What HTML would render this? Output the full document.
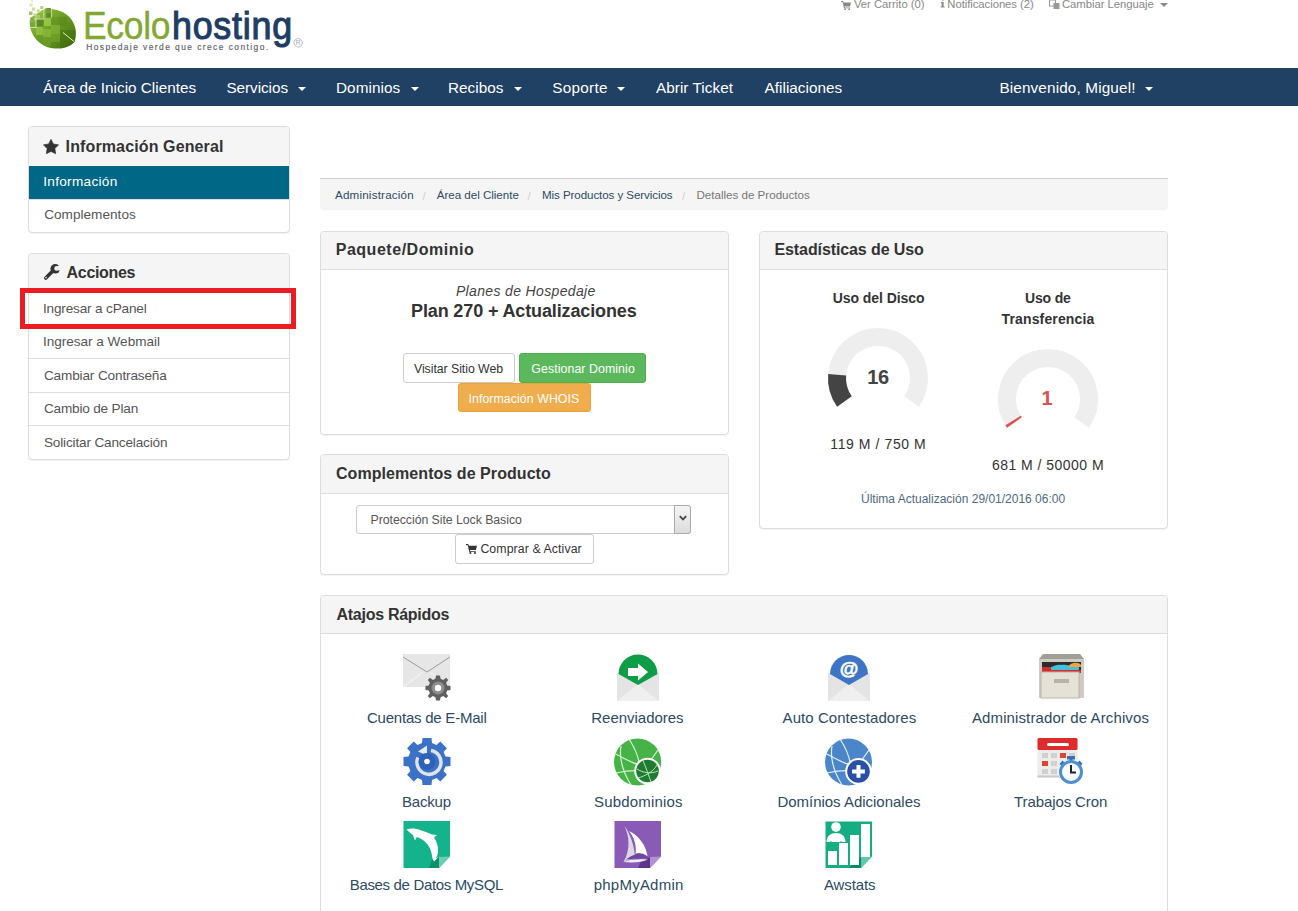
<!DOCTYPE html>
<html><head><meta charset="utf-8">
<style>
*{box-sizing:border-box;margin:0;padding:0}
html,body{width:1298px;height:911px;overflow:hidden;background:#fff;font-family:"Liberation Sans",sans-serif;color:#333}
.t{position:absolute;white-space:nowrap;line-height:1}
.b{position:absolute}
.panel{position:absolute;border:1px solid #ddd;border-radius:4px;background:#fff;box-shadow:0 1px 1px rgba(0,0,0,.05);overflow:hidden}
.ph{position:absolute;left:0;top:0;right:0;background:#f5f5f5;border-bottom:1px solid #ddd}
.li{position:absolute;left:0;right:0;height:1px;background:#ddd}
.caret{position:absolute;width:0;height:0;border-left:4px solid transparent;border-right:4px solid transparent;border-top:4px solid #fff}
svg{position:absolute;overflow:visible}
</style></head><body>
<!-- ===== LOGO ===== -->
<svg style="left:0;top:0" width="1" height="1">
  <defs>
    <linearGradient id="lg1" x1="0" y1="0" x2="1" y2="1">
      <stop offset="0" stop-color="#a2cf4a"/><stop offset=".45" stop-color="#6f9f26"/><stop offset="1" stop-color="#3d6a0c"/>
    </linearGradient>
    <clipPath id="leafc"><path d="M47 9 C60 8.5 73 15 75.5 29 C76.3 34 75.5 39 74.5 42 C70 47 62 49 55 48.5 C44 48 34 41 30.5 29 C29.5 25 29.5 21 30 18 L46 8Z"/></clipPath>
  </defs>
  <g clip-path="url(#leafc)">
    <rect x="28" y="6" width="50" height="44" fill="url(#lg1)"/>
    <rect x="51" y="17" width="8" height="8" fill="#5f8f1f" opacity=".45"/>
    <rect x="59" y="17" width="8" height="9" fill="#4f7f15" opacity=".4"/>
    <rect x="51" y="25" width="9" height="9" fill="#8dbb3c" opacity=".55"/>
    <rect x="43" y="29" width="8" height="8" fill="#93c445" opacity=".6"/>
    <rect x="43" y="37" width="8" height="9" fill="#76a82c" opacity=".45"/>
    <rect x="51" y="34" width="9" height="8" fill="#7fae33" opacity=".45"/>
    <rect x="36" y="27" width="7" height="8" fill="#9fcf4f" opacity=".6"/>
    <rect x="60" y="30" width="16" height="20" fill="#3a650a" opacity=".35"/>
    <rect x="30" y="22" width="5.5" height="6" fill="#7aa83a"/>
    <rect x="36.5" y="19.5" width="7" height="7" fill="#5a8a20"/>
    <rect x="44" y="18" width="7" height="8" fill="#a9d552" opacity=".6"/>
  </g>
  <g stroke="#fff" stroke-width=".9" opacity=".7">
    <path d="M28 19 H44 M28 27.5 H36.5 M36 0 V27.5 M43.8 0 V19 M51.3 0 V17.8"/>
  </g>
  <path d="M63 32.5 L74 41.5" stroke="#e4f2c2" stroke-width="1"/>
  <g>
    <rect x="46.3" y="8" width="4.5" height="4.5" fill="#6f9934"/>
    <rect x="46.3" y="13" width="4.5" height="4.5" fill="#5e8a2a"/>
    <rect x="40.5" y="15.5" width="3" height="3" fill="#8fb54a"/>
    <rect x="40.3" y="6" width="3" height="3" fill="#b8d27a"/>
    <rect x="36.8" y="9.5" width="3" height="3" fill="#c5dc8e"/>
    <rect x="37" y="15" width="3" height="3" fill="#a9c766"/>
    <rect x="32" y="7.5" width="3" height="3" fill="#c7dd92"/>
    <rect x="29" y="11.5" width="3.5" height="3.5" fill="#a8bf7a"/>
    <rect x="33.5" y="13.5" width="2.5" height="2.5" fill="#bed58a"/>
    <rect x="29.5" y="3.5" width="3" height="3" fill="#d8e8b0"/>
    <rect x="31" y="0" width="2" height="2" fill="#e4efc8"/>
    <rect x="30.5" y="17.5" width="3.5" height="3.5" fill="#8aaa5a"/>
    <rect x="41" y="10.5" width="2.5" height="2.5" fill="#9cbf5a"/>
  </g>
</svg>
<div class="t" style="left:83px;top:7.3px;font-size:38px;line-height:1;color:#83a732;transform:scaleX(.933);transform-origin:0 0;letter-spacing:-.3px;-webkit-text-stroke:.4px #83a732">Ecolo</div>
<div class="t" style="left:172px;top:7.3px;font-size:38px;line-height:1;color:#1f3d63;transform:scaleX(.943);transform-origin:0 0;letter-spacing:.8px;-webkit-text-stroke:1.1px #1f3d63">hosting</div>
<svg style="left:293px;top:38px" width="11" height="11" viewBox="0 0 11 11"><circle cx="5.2" cy="4.8" r="4.2" fill="none" stroke="#a8a8b0" stroke-width=".8"/><text x="5.2" y="7.2" text-anchor="middle" font-family="Liberation Sans" font-size="6.5" fill="#a8a8b0">R</text></svg>

<!-- ===== TOP LINKS ICONS ===== -->
<svg style="left:841px;top:0.5" width="10" height="9" viewBox="0 0 10 9">
  <path d="M0 0 H2 L2.6 1.5 H10 L9 5.5 H3.5 L3.8 6.5 H9 V7.2 H3 L1.6 1 H0Z" fill="#888"/>
  <circle cx="4" cy="8.2" r=".9" fill="#888"/><circle cx="8.2" cy="8.2" r=".9" fill="#888"/>
</svg>
<svg style="left:939.5px;top:-1.5px" width="5" height="9" viewBox="0 0 5 9">
  <circle cx="2.7" cy="0.6" r="1.1" fill="#888"/><path d="M1 3 H3.6 V7.5 H4.6 V8.6 H0.6 V7.5 H1.6 V4.1 H1Z" fill="#888"/>
</svg>
<svg style="left:1049px;top:0" width="11" height="9" viewBox="0 0 11 9">
  <rect x="0.5" y="0" width="6" height="6" fill="none" stroke="#999" stroke-width="1"/>
  <rect x="4.5" y="3" width="6" height="6" fill="#999"/>
</svg>
<div class="caret" style="left:1160px;top:3px;border-top-color:#888;border-left-width:4px;border-right-width:4px"></div>

<!-- ===== NAV ===== -->
<div class="b" style="left:0;top:68px;width:1298px;height:38px;background:#204064"></div>
<div class="caret" style="left:298px;top:87px"></div>
<div class="caret" style="left:411px;top:87px"></div>
<div class="caret" style="left:514px;top:87px"></div>
<div class="caret" style="left:617px;top:87px"></div>
<div class="caret" style="left:1145px;top:87px"></div>

<!-- ===== SIDEBAR 1 ===== -->
<div class="panel" style="left:28px;top:126px;width:262px;height:107px">
  <div class="ph" style="height:40px;border-bottom:0"></div>
  <div class="b" style="left:0;top:39px;width:262px;height:33px;background:#006787"></div>
  <div class="li" style="top:72px"></div>
</div>
<svg style="left:43.2px;top:138.5px" width="16" height="15" viewBox="0 0 16 15">
  <path d="M8.00 0.30 L10.41 4.98 L15.61 5.83 L11.90 9.57 L12.70 14.77 L8.00 12.40 L3.30 14.77 L4.10 9.57 L0.39 5.83 L5.59 4.98Z" fill="#333" stroke="#333" stroke-width=".6" stroke-linejoin="round"/>
</svg>

<!-- ===== SIDEBAR 2 ===== -->
<div class="panel" style="left:28px;top:253px;width:262px;height:207px">
  <div class="ph" style="height:38px"></div>
  <div class="li" style="top:71px"></div>
  <div class="li" style="top:104px"></div>
  <div class="li" style="top:138px"></div>
  <div class="li" style="top:171px"></div>
</div>
<svg style="left:0;top:0" width="1" height="1">
  <path d="M45.8 278 L52.5 271.3" stroke="#333" stroke-width="3.6" stroke-linecap="round"/>
  <circle cx="55.2" cy="268.8" r="4.8" fill="#333"/>
  <circle cx="56.6" cy="268.4" r="2.3" fill="#f5f5f5"/>
  <path d="M57 266.6 L61 264.5 L61.5 270.5 L57.5 270.2Z" fill="#f5f5f5"/>
  <circle cx="46" cy="277.6" r=".8" fill="#f5f5f5"/>
</svg>
<div class="b" style="left:20px;top:288px;width:276px;height:41px;border:5px solid #ec1c24"></div>

<!-- ===== BREADCRUMB ===== -->
<div class="b" style="left:320px;top:178px;width:848px;height:32px;background:#f5f5f5;border-top:1px solid #cfcfcf;border-radius:0 0 4px 4px"></div>

<!-- ===== PAQUETE ===== -->
<div class="panel" style="left:320px;top:231px;width:409px;height:204px">
  <div class="ph" style="height:38px"></div>
</div>
<div class="b" style="left:403px;top:353px;width:112px;height:30px;background:#fff;border:1px solid #ccc;border-radius:3px"></div>
<div class="b" style="left:519px;top:353px;width:127px;height:30px;background:#5cb85c;border:1px solid #4cae4c;border-radius:3px"></div>
<div class="b" style="left:458px;top:383px;width:133px;height:29px;background:#f0ad4e;border:1px solid #eea236;border-radius:3px"></div>

<!-- ===== STATS ===== -->
<div class="panel" style="left:759px;top:231px;width:409px;height:298px">
  <div class="ph" style="height:38px"></div>
</div>
<svg style="left:0;top:0" width="1" height="1">
  <!-- gauge 1: center 878,378 r=41 sw=18 ; from -125deg to +125deg -->
  <path d="M844.42 401.52 A41 41 0 1 1 911.58 401.52" fill="none" stroke="#eeeeee" stroke-width="18"/>
  <path d="M844.42 401.52 A41 41 0 0 1 837.14 374.66" fill="none" stroke="#444" stroke-width="18"/>
  <!-- gauge 2: center 1048,399 r=41 -->
  <path d="M1014.42 422.52 A41 41 0 1 1 1081.58 422.52" fill="none" stroke="#eeeeee" stroke-width="18"/>
  <path d="M1014.42 422.52 A41 41 0 0 1 1013.08 420.48" fill="none" stroke="#d9534f" stroke-width="18"/>
</svg>

<!-- ===== COMPLEMENTOS ===== -->
<div class="panel" style="left:320px;top:454px;width:409px;height:121px">
  <div class="ph" style="height:39px"></div>
</div>
<div class="b" style="left:356px;top:505px;width:335px;height:29px;background:#fff;border:1px solid #ccc;border-radius:3px"></div>
<div class="b" style="left:674px;top:505px;width:17px;height:29px;background:linear-gradient(#f4f4f4,#dcdcdc);border:1px solid #aaa;border-radius:0 3px 3px 0"></div>
<svg style="left:679px;top:515px" width="8" height="7" viewBox="0 0 8 7">
  <path d="M.8 1.2 L4 4.4 L7.2 1.2" fill="none" stroke="#444" stroke-width="1.8"/>
</svg>
<div class="b" style="left:455px;top:534px;width:139px;height:30px;background:#fff;border:1px solid #ccc;border-radius:3px"></div>
<svg style="left:466px;top:544px" width="11" height="10" viewBox="0 0 10 9">
  <path d="M0 0 H2 L2.6 1.5 H10 L9 5.5 H3.5 L3.8 6.5 H9 V7.2 H3 L1.6 1 H0Z" fill="#333"/>
  <circle cx="4" cy="8.2" r=".9" fill="#333"/><circle cx="8.2" cy="8.2" r=".9" fill="#333"/>
</svg>

<!-- ===== ATAJOS ===== -->
<div class="panel" style="left:320px;top:595px;width:848px;height:340px">
  <div class="ph" style="height:38px"></div>
</div>
<!-- email accounts -->
<svg style="left:403px;top:654px" width="48" height="48" viewBox="0 0 48 48">
  <rect x="0" y="0" width="47" height="33" fill="#e6e6e6"/>
  <path d="M0 33 L20 18 M47 33 L27 18" stroke="#f2f2f2" stroke-width="1.2"/>
  <path d="M0 3 L24 18 L47 3" fill="none" stroke="#9a9a9a" stroke-width="1"/>
  <g transform="translate(35 34)">
    <path d="M-2 -12.5 H2 L2.6 -9.2 L5.2 -8.1 L8.1 -10.2 L10.2 -8.1 L8.1 -5.2 L9.2 -2.6 L12.5 -2 V2 L9.2 2.6 L8.1 5.2 L10.2 8.1 L8.1 10.2 L5.2 8.1 L2.6 9.2 L2 12.5 H-2 L-2.6 9.2 L-5.2 8.1 L-8.1 10.2 L-10.2 8.1 L-8.1 5.2 L-9.2 2.6 L-12.5 2 V-2 L-9.2 -2.6 L-8.1 -5.2 L-10.2 -8.1 L-8.1 -10.2 L-5.2 -8.1 L-2.6 -9.2Z" fill="#5f5f5f"/>
    <circle r="6.5" fill="#8e8e8e"/><circle r="3.2" fill="#fff"/>
  </g>
</svg>
<!-- forwarders -->
<svg style="left:617px;top:654px" width="48" height="48" viewBox="0 0 48 48">
  <rect x="0" y="19" width="42" height="28" fill="#e4e4e4"/>
  <path d="M0 47 L21 30 L42 47Z" fill="#efefef"/>
  <path d="M1.5 20 A19.5 19.5 0 0 1 40.5 20 L21 31 Z" fill="#0e9c47"/>
  <path d="M11 14 H21 V9.5 L31 18 L21 26.5 V22 H11Z" fill="#fff"/>
</svg>
<!-- auto responders -->
<svg style="left:828px;top:654px" width="48" height="48" viewBox="0 0 48 48">
  <rect x="0" y="19" width="42" height="28" fill="#e4e4e4"/>
  <path d="M0 47 L21 30 L42 47Z" fill="#efefef"/>
  <path d="M2 20 A19 19 0 0 1 40 20 L21 31 Z" fill="#3d74c3"/>
  <text x="21" y="21" text-anchor="middle" font-family="Liberation Sans" font-weight="bold" font-size="19" fill="#fff" stroke="#fff" stroke-width=".6">@</text>
</svg>
<!-- file manager -->
<svg style="left:1039px;top:654px" width="48" height="48" viewBox="0 0 48 48">
  <path d="M4 0 H41 L45 5 H0Z" fill="#a29d96"/>
  <rect x="0" y="5" width="45" height="39" fill="#cfcbc2"/>
  <rect x="3" y="8" width="39" height="11" fill="#2b2b2b"/>
  <path d="M3 13 H12 L13 19 H3Z" fill="#d62a2a"/>
  <path d="M12 13 C16 12 18 10 22 11 C26 10 30 12 40 12 V16 H12Z" fill="#46bfd8"/>
  <path d="M30 12 C32 8 40 8 42 11 V13 H30Z" fill="#f3a33b"/>
  <rect x="12" y="16" width="30" height="3" fill="#d62a2a"/>
  <rect x="2" y="18" width="38" height="26" fill="#e5e1d6" stroke="#b9b4aa" stroke-width="1"/>
  <rect x="15" y="25" width="15" height="4" fill="#b8b2a6"/>
</svg>
<!-- backup -->
<svg style="left:403px;top:738px" width="48" height="48" viewBox="0 0 48 48">
  <g transform="translate(24 23.5)">
    <path d="M-4.5 -23.5 H4.5 L5 -18.5 L9.5 -16.6 L13.3 -19.9 L19.9 -13.3 L16.6 -9.5 L18.5 -5 L23.5 -4.5 V4.5 L18.5 5 L16.6 9.5 L19.9 13.3 L13.3 19.9 L9.5 16.6 L5 18.5 L4.5 23.5 H-4.5 L-5 18.5 L-9.5 16.6 L-13.3 19.9 L-19.9 13.3 L-16.6 9.5 L-18.5 5 L-23.5 4.5 V-4.5 L-18.5 -5 L-16.6 -9.5 L-19.9 -13.3 L-13.3 -19.9 L-9.5 -16.6 L-5 -18.5Z" fill="#3b71c6"/>
    <path d="M-9 -4 A12 12 0 1 0 4 -11" fill="none" stroke="#dfe3ea" stroke-width="3.5"/>
    <path d="M0 -16 L-9 -10 L0 -6Z" fill="#e8ecf2"/>
    <circle r="8.5" fill="#2e62b8"/>
    <circle r="2.8" fill="#fff"/>
  </g>
</svg>
<!-- subdomains -->
<svg style="left:613px;top:738px" width="50" height="50" viewBox="0 0 50 50">
  <circle cx="24.6" cy="24" r="23.6" fill="#45b348"/>
  <g fill="none" stroke="#d8f5cf" stroke-width="1.2">
    <path d="M16 1 C22 10 26 20 27 30"/>
    <path d="M1 15 C10 20 20 26 28 27"/>
    <path d="M3 35 C12 33 22 32 30 33"/>
    <path d="M8 8 C6 20 10 34 18 47"/>
    <path d="M45 12 C40 20 34 26 30 29"/>
  </g>
  <circle cx="34.5" cy="33" r="13.3" fill="#fff"/>
  <circle cx="34.5" cy="33" r="11.3" fill="#1f7a32"/>
  <g fill="none" stroke="#b5e8b0" stroke-width="1">
    <path d="M24 31 C30 35 38 36 45 33"/>
    <path d="M30 22.5 C33 30 36 38 38 44"/>
    <path d="M25 40 C32 38 40 34 44 27"/>
  </g>
</svg>
<!-- addon domains -->
<svg style="left:824px;top:738px" width="50" height="50" viewBox="0 0 50 50">
  <circle cx="24.5" cy="24" r="23.5" fill="#4a86c9"/>
  <g fill="none" stroke="#e3efff" stroke-width="1.2">
    <path d="M16 1 C22 10 26 20 27 30"/>
    <path d="M1 15 C10 20 20 26 28 27"/>
    <path d="M3 35 C12 33 22 32 30 33"/>
    <path d="M8 8 C6 20 10 34 18 47"/>
    <path d="M45 12 C40 20 34 26 30 29"/>
  </g>
  <circle cx="34.5" cy="33.4" r="13.3" fill="#fff"/>
  <circle cx="34.5" cy="33.4" r="11.3" fill="#2a4fa6"/>
  <path d="M32.5 27 H36.5 V31.4 H40.9 V35.4 H36.5 V39.8 H32.5 V35.4 H28.1 V31.4 H32.5Z" fill="#fff"/>
</svg>
<!-- cron -->
<svg style="left:1037px;top:738px" width="50" height="50" viewBox="0 0 50 50">
  <rect x="0.5" y="0" width="40" height="39.5" rx="1.5" fill="#ececec"/>
  <rect x="0.5" y="37.5" width="40" height="2" fill="#c8c8c8"/>
  <rect x="0.5" y="0" width="40" height="12" rx="1.5" fill="#de2b2b"/>
  <rect x="10" y="5" width="22" height="3" rx="1.5" fill="#fff"/>
  <g fill="#d0d0d0">
    <rect x="5" y="15" width="6" height="5"/><rect x="14" y="15" width="6" height="5"/><rect x="23" y="15" width="6" height="5" fill="#e0442f"/><rect x="32" y="15" width="6" height="5"/>
    <rect x="5" y="23" width="6" height="5" fill="#e0442f"/><rect x="14" y="23" width="6" height="5"/>
    <rect x="5" y="31" width="6" height="5"/><rect x="14" y="31" width="6" height="5"/>
  </g>
  <circle cx="34" cy="34" r="12.5" fill="#fff"/>
  <rect x="30" y="18" width="8" height="3.5" fill="#3a6fba"/>
  <rect x="32.5" y="20" width="3" height="3" fill="#3a6fba"/>
  <path d="M22.5 26 L25.5 22.5 L28.5 25.5 L25.5 28.5Z M45.5 26 L42.5 22.5 L39.5 25.5 L42.5 28.5Z" fill="#3a6fba"/>
  <circle cx="34" cy="34" r="10.5" fill="#fafafa" stroke="#4f8fcf" stroke-width="3"/>
  <path d="M34 27 V34.5 H39" fill="none" stroke="#1b2230" stroke-width="2"/>
</svg>
<!-- mysql -->
<svg style="left:403px;top:821px" width="48" height="48" viewBox="0 0 48 48">
  <path d="M0.5 0 H47 V35.5 L36 47 H0.5Z" fill="#14b38b"/>
  <path d="M47 35.5 L36 47 V36 Z" fill="#6ccdb1"/>
  <path d="M30 36 L36 36 L36 47 L26 47Z" fill="#0c8f6c"/>
  <path d="M3.5 8.4 C8 7 13 7.5 17 9 C22 10.5 26 12 29 13.5 L34 14 L31 16.5 C34 21 35.5 26 35 31 C34.8 33.5 34 35.5 32.5 37 L35.5 36 L31 40.5 L29.5 38 C29 33 28 28 25 24 C22 20 18 17.5 14 16 C13 17 12.5 18.5 12 19.5 C11 17.5 10.5 15.5 10 14 C7.5 12 5.5 10.5 3.5 8.4Z" fill="#fff"/>
</svg>
<!-- phpmyadmin -->
<svg style="left:614px;top:821px" width="48" height="48" viewBox="0 0 48 48">
  <path d="M0.5 0 H47 V35.5 L36 47 H0.5Z" fill="#895bb6"/>
  <path d="M47 35.5 L36 47 V36 Z" fill="#b290d2"/>
  <path d="M27 40 L36 36 L36 47 L24 47Z" fill="#5e3489"/>
  <path d="M10.5 5 C15 15 17 28 9.5 41 C14 38.5 18 37.5 21 38 C21 27 17 14 10.5 5Z" fill="#dcd8e6"/>
  <path d="M15 10 C24 14 32 24 33.5 35 L27 33 C26 32 24 31.5 21.5 33 C23 25 20 16 15 10Z" fill="#fff"/>
  <path d="M12 38.5 C17 34.5 23 32 28 32.5 C31 33 33 35 33.5 37 C28 37 20 38 12 38.5Z" fill="#6f45a0"/>
  <path d="M9.5 41 C16 38 26 38 34 38.5 C28 41.5 18 42 9.5 41Z" fill="#f0eef5"/>
</svg>
<!-- awstats -->
<svg style="left:825px;top:821px" width="48" height="48" viewBox="0 0 48 48">
  <path d="M0.5 0.5 H47 V35.5 L36 47 H0.5Z" fill="#17ad82"/>
  <path d="M47 35.5 L36 47 V36 Z" fill="#5fcaa9"/>
  <path d="M28 42 L36 36 L36 47 L24 47Z" fill="#0b8a62"/>
  <circle cx="11" cy="6" r="4.8" fill="#fff"/>
  <path d="M1.5 21 C1.5 15 6 12 11 12 C16 12 20.5 15 20.5 21Z" fill="#fff"/>
  <path d="M6 20 V22 M16 20 V22" stroke="#17ad82" stroke-width="1"/>
  <rect x="3" y="30" width="9" height="14" fill="#fff"/>
  <rect x="14" y="22" width="9" height="22" fill="#fff"/>
  <rect x="25" y="14" width="9" height="30" fill="#fff"/>
  <rect x="36" y="3" width="9" height="33" fill="#fff"/>
</svg>


<span class="t" style="left:853.90px;top:-1.07px;font-size:11.3px;color:#888;letter-spacing:-0.020px">Ver Carrito (0)</span>
<span class="t" style="left:947.30px;top:-1.07px;font-size:11.3px;color:#888;letter-spacing:-0.048px">Notificaciones (2)</span>
<span class="t" style="left:1062.00px;top:-1.07px;font-size:11.3px;color:#888;letter-spacing:-0.036px">Cambiar Lenguaje</span>
<span class="t" style="left:86.20px;top:42.79px;font-size:8.4px;color:#5c5e66;letter-spacing:1.450px;-webkit-text-stroke:.15px #5c5e66">Hospedaje verde que crece contigo.</span>
<span class="t" style="left:43.00px;top:79.85px;font-size:15.3px;color:#fff">Área de Inicio Clientes</span>
<span class="t" style="left:226.40px;top:79.85px;font-size:15.3px;color:#fff;letter-spacing:-0.051px">Servicios</span>
<span class="t" style="left:336.00px;top:79.85px;font-size:15.3px;color:#fff;letter-spacing:0.056px">Dominios</span>
<span class="t" style="left:448.00px;top:79.85px;font-size:15.3px;color:#fff;letter-spacing:0.031px">Recibos</span>
<span class="t" style="left:552.30px;top:79.85px;font-size:15.3px;color:#fff;letter-spacing:0.272px">Soporte</span>
<span class="t" style="left:656.00px;top:79.85px;font-size:15.3px;color:#fff;letter-spacing:0.043px">Abrir Ticket</span>
<span class="t" style="left:764.60px;top:79.85px;font-size:15.3px;color:#fff;letter-spacing:0.016px">Afiliaciones</span>
<span class="t" style="left:999.40px;top:79.85px;font-size:15.3px;color:#fff;letter-spacing:0.141px">Bienvenido, Miguel!</span>
<span class="t" style="left:65.60px;top:139.46px;font-size:16px;color:#333;font-weight:bold;letter-spacing:0.125px">Información General</span>
<span class="t" style="left:43.20px;top:175.49px;font-size:13.6px;color:#fff;letter-spacing:0.304px">Información</span>
<span class="t" style="left:44.20px;top:208.49px;font-size:13.6px;color:#555;letter-spacing:0.016px">Complementos</span>
<span class="t" style="left:66.60px;top:265.46px;font-size:16px;color:#333;font-weight:bold;letter-spacing:-0.335px">Acciones</span>
<span class="t" style="left:43.00px;top:301.99px;font-size:13.6px;color:#555;letter-spacing:-0.177px">Ingresar a cPanel</span>
<span class="t" style="left:42.90px;top:335.19px;font-size:13.6px;color:#555;letter-spacing:-0.029px">Ingresar a Webmail</span>
<span class="t" style="left:43.90px;top:369.49px;font-size:13.6px;color:#555;letter-spacing:-0.145px">Cambiar Contraseña</span>
<span class="t" style="left:43.90px;top:402.49px;font-size:13.6px;color:#555;letter-spacing:-0.182px">Cambio de Plan</span>
<span class="t" style="left:43.90px;top:436.09px;font-size:13.6px;color:#555;letter-spacing:-0.164px">Solicitar Cancelación</span>
<span class="t" style="left:335.00px;top:189.18px;font-size:11.6px;color:#2d4b64;letter-spacing:0.201px">Administración</span>
<span class="t" style="left:422.50px;top:189.68px;font-size:11.6px;color:#d0d0d0">/</span>
<span class="t" style="left:436.80px;top:189.18px;font-size:11.6px;color:#2d4b64;letter-spacing:-0.030px">Área del Cliente</span>
<span class="t" style="left:527.50px;top:189.68px;font-size:11.6px;color:#d0d0d0">/</span>
<span class="t" style="left:542.00px;top:189.18px;font-size:11.6px;color:#2d4b64;letter-spacing:-0.089px">Mis Productos y Servicios</span>
<span class="t" style="left:682.00px;top:189.68px;font-size:11.6px;color:#d0d0d0">/</span>
<span class="t" style="left:696.40px;top:189.18px;font-size:11.6px;color:#777">Detalles de Productos</span>
<span class="t" style="left:335.70px;top:242.36px;font-size:16px;color:#333;font-weight:bold;letter-spacing:0.528px">Paquete/Dominio</span>
<span class="t" style="left:774.50px;top:242.36px;font-size:16px;color:#333;font-weight:bold;letter-spacing:-0.105px">Estadísticas de Uso</span>
<span class="t" style="left:336.00px;top:466.46px;font-size:16px;color:#333;font-weight:bold;letter-spacing:0.062px">Complementos de Producto</span>
<span class="t" style="left:336.50px;top:607.16px;font-size:16px;color:#333;font-weight:bold;letter-spacing:-0.274px">Atajos Rápidos</span>
<span class="t" style="left:455.90px;top:283.95px;font-size:14px;color:#444;font-style:italic;letter-spacing:0.355px">Planes de Hospedaje</span>
<span class="t" style="left:411.00px;top:301.56px;font-size:18px;color:#333;font-weight:bold;letter-spacing:-0.128px">Plan 270 + Actualizaciones</span>
<span class="t" style="left:414.00px;top:362.59px;font-size:12.3px;color:#333;letter-spacing:-0.045px">Visitar Sitio Web</span>
<span class="t" style="left:531.30px;top:362.59px;font-size:12.3px;color:#fff;letter-spacing:0.100px">Gestionar Dominio</span>
<span class="t" style="left:468.50px;top:392.59px;font-size:12.3px;color:#fff;letter-spacing:0.086px">Información WHOIS</span>
<span class="t" style="left:832.70px;top:290.85px;font-size:14px;color:#333;font-weight:bold;letter-spacing:-0.052px">Uso del Disco</span>
<span class="t" style="left:1025.00px;top:291.15px;font-size:14px;color:#333;font-weight:bold;letter-spacing:-0.178px">Uso de</span>
<span class="t" style="left:1001.50px;top:312.05px;font-size:14px;color:#333;font-weight:bold;letter-spacing:0.145px">Transferencia</span>
<span class="t" style="left:867.30px;top:367.07px;font-size:20px;color:#444;font-weight:bold;letter-spacing:-0.423px">16</span>
<span class="t" style="left:1041.50px;top:388.07px;font-size:20px;color:#d9534f;font-weight:bold">1</span>
<span class="t" style="left:830.30px;top:436.95px;font-size:14px;color:#333;letter-spacing:0.584px">119 M / 750 M</span>
<span class="t" style="left:992.00px;top:457.95px;font-size:14px;color:#333;letter-spacing:0.464px">681 M / 50000 M</span>
<span class="t" style="left:861.00px;top:492.54px;font-size:12px;color:#4e6b80">Última Actualización 29/01/2016 06:00</span>
<span class="t" style="left:370.60px;top:513.59px;font-size:12.3px;color:#555;letter-spacing:-0.045px">Protección Site Lock Basico</span>
<span class="t" style="left:480.40px;top:543.09px;font-size:12.3px;color:#333;letter-spacing:0.097px">Comprar &amp; Activar</span>
<span class="t" style="left:367.00px;top:710.40px;font-size:15px;color:#2c4a62;letter-spacing:-0.229px">Cuentas de E-Mail</span>
<span class="t" style="left:591.30px;top:710.40px;font-size:15px;color:#2c4a62;letter-spacing:-0.023px">Reenviadores</span>
<span class="t" style="left:782.60px;top:710.40px;font-size:15px;color:#2c4a62;letter-spacing:0.060px">Auto Contestadores</span>
<span class="t" style="left:972.00px;top:710.40px;font-size:15px;color:#2c4a62;letter-spacing:0.110px">Administrador de Archivos</span>
<span class="t" style="left:402.00px;top:793.90px;font-size:15px;color:#2c4a62;letter-spacing:-0.198px">Backup</span>
<span class="t" style="left:594.00px;top:793.90px;font-size:15px;color:#2c4a62;letter-spacing:0.178px">Subdominios</span>
<span class="t" style="left:777.40px;top:793.90px;font-size:15px;color:#2c4a62;letter-spacing:-0.018px">Domínios Adicionales</span>
<span class="t" style="left:1014.00px;top:793.90px;font-size:15px;color:#2c4a62;letter-spacing:-0.095px">Trabajos Cron</span>
<span class="t" style="left:349.80px;top:876.90px;font-size:15px;color:#2c4a62;letter-spacing:-0.344px">Bases de Datos MySQL</span>
<span class="t" style="left:593.70px;top:876.90px;font-size:15px;color:#2c4a62;letter-spacing:0.234px">phpMyAdmin</span>
<span class="t" style="left:824.00px;top:876.90px;font-size:15px;color:#2c4a62;letter-spacing:-0.124px">Awstats</span>
</body></html>
